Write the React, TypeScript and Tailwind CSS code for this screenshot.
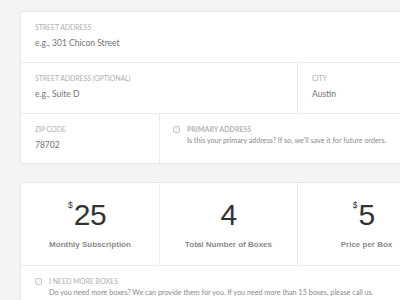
const lato = { fontFamily: 'Lato, "Open Sans", sans-serif' }
const arial = { fontFamily: '"Liberation Sans", Arial, sans-serif' }

function Field({ label, value, className = '' }: { label: string; value: string; className?: string }) {
  return (
    <div className={`flex flex-col pl-[14px] pt-[10px] ${className}`}>
      <span className="text-[7px] leading-[10px] uppercase text-[#b0b0b0] tracking-[-0.1px]">{label}</span>
      <span className="mt-[5px] text-[8.5px] leading-[12px] text-[#747474]">{value}</span>
    </div>
  )
}

function Checkbox() {
  return <span className="mt-[2px] h-[7px] w-[7px] shrink-0 rounded-[2px] border border-[#c8c8c8] bg-[#f6f6f6]" />
}

function Stat({ value, label, dollar }: { value: string; label: string; dollar?: boolean }) {
  return (
    <div className="flex flex-col items-center pt-[17px]" style={arial}>
      <div className="relative text-[#333]">
        {dollar && (
          <span className="absolute right-full top-[1px] mr-[1px] text-[8.5px] leading-[9px]">$</span>
        )}
        <span className="text-[30px] leading-[30px] tracking-[-0.5px]">{value}</span>
      </div>
      <span className="mt-[7px] text-[8px] font-bold leading-[12px] text-[#8a8a8a]">{label}</span>
    </div>
  )
}

export default function App() {
  return (
    <div className="h-[300px] w-[400px] overflow-hidden bg-[#f4f4f4] pl-[20px] pt-[11px]" style={lato}>
      {/* Address card */}
      <div className="w-[416px] rounded-[2px] border border-[#e6e6e6] bg-white">
        <Field label="Street Address" value="e.g., 301 Chicon Street" className="h-[51px] border-b border-[#ececec]" />
        <div className="grid h-[51px] grid-cols-[277px_1fr] border-b border-[#ececec]">
          <Field label="Street Address (Optional)" value="e.g., Suite D" className="border-r border-[#ececec]" />
          <Field label="City" value="Austin" />
        </div>
        <div className="grid h-[49px] grid-cols-[139px_1fr]">
          <Field label="Zip Code" value="78702" className="border-r border-[#ececec]" />
          <div className="flex gap-[7px] pl-[13px] pt-[10px]">
            <Checkbox />
            <div className="flex flex-col">
              <span className="text-[7px] font-bold leading-[10px] uppercase text-[#b4b4b4]">Primary Address</span>
              <span className="mt-[1px] whitespace-nowrap text-[7.2px] leading-[11px] text-[#8a8a8a]">
                Is this your primary address? If so, we'll save it for future orders.
              </span>
            </div>
          </div>
        </div>
      </div>

      {/* Subscription card */}
      <div className="mt-[18px] w-[416px] rounded-[2px] border border-[#e6e6e6] bg-white">
        <div className="grid h-[83px] grid-cols-[139px_138px_1fr] border-b border-[#ececec]">
          <div className="border-r border-[#ececec]">
            <Stat value="25" label="Monthly Subscription" dollar />
          </div>
          <div className="border-r border-[#ececec]">
            <Stat value="4" label="Total Number of Boxes" />
          </div>
          <div>
            <Stat value="5" label="Price per Box" dollar />
          </div>
        </div>
        <div className="flex gap-[7px] pl-[14px] pt-[10px] pb-[10px]">
          <Checkbox />
          <div className="flex flex-col">
            <span className="text-[7px] leading-[10px] uppercase text-[#b0b0b0]">I need more boxes</span>
            <span className="mt-[1px] whitespace-nowrap text-[7.2px] leading-[11px] text-[#8a8a8a]">
              Do you need more boxes? We can provide them for you. If you need more than 15 boxes, please call us.
            </span>
          </div>
        </div>
      </div>
    </div>
  )
}
